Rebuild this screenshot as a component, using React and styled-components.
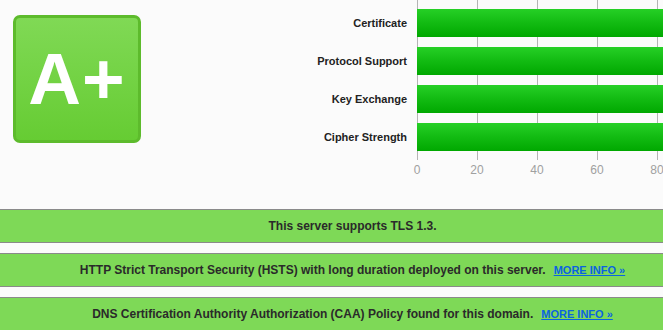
import React from 'react'
import styled, { createGlobalStyle } from 'styled-components';

const GlobalStyle = createGlobalStyle`
  html, body {
    margin: 0;
    padding: 0;
    background: #fbfbfb;
    font-family: "Liberation Sans", Arial, sans-serif;
    overflow: hidden;
  }
`;

const categories = ['Certificate', 'Protocol Support', 'Key Exchange', 'Cipher Strength'];
const ticks = [0, 20, 40, 60, 80];

const notices = [
    { text: 'This server supports TLS 1.3.' },
    { text: 'HTTP Strict Transport Security (HSTS) with long duration deployed on this server.', link: true },
    { text: 'DNS Certification Authority Authorization (CAA) Policy found for this domain.', link: true },
];

const App = () => {
    return (
        <Main>
            <GlobalStyle />
            <Summary>
                <Grade>A+</Grade>
                <Chart>
                    <Labels>
                        {categories.map((c) => <Label key={c}>{c}</Label>)}
                    </Labels>
                    <Plot>
                        {categories.map((c) => <Bar key={c} />)}
                    </Plot>
                    <span />
                    <Ticks>
                        {ticks.map((t) => <Tick key={t}>{t}</Tick>)}
                    </Ticks>
                </Chart>
            </Summary>
            <Notices>
                {notices.map((n) => (
                    <Notice key={n.text}>
                        {n.text}
                        {n.link && <MoreInfo href="#">MORE INFO »</MoreInfo>}
                    </Notice>
                ))}
            </Notices>
        </Main>
    )
};

const Main = styled.section`
  width: 663px;
  height: 330px;
  overflow: hidden;
`;

const Summary = styled.div`
  display: flex;
  align-items: flex-start;
  height: 209px;
`;

const Grade = styled.div`
  flex-shrink: 0;
  box-sizing: border-box;
  width: 128px;
  height: 128px;
  margin: 15px 0 0 13px;
  border: 3px solid #5dbb2c;
  border-radius: 7px;
  background: linear-gradient(to bottom, #80d955 0%, #66cc33 100%);
  color: #fff;
  font-size: 73px;
  font-weight: bold;
  display: flex;
  align-items: center;
  justify-content: center;
  letter-spacing: 1px;
  padding-bottom: 1px;
`;

const Chart = styled.div`
  flex-shrink: 0;
  display: grid;
  grid-template-columns: 266px 300px;
  column-gap: 10px;
`;

const Labels = styled.div`
  display: flex;
  flex-direction: column;
  gap: 10px;
  padding-top: 9px;
`;

const Label = styled.div`
  height: 28px;
  line-height: 28px;
  text-align: right;
  font-size: 11px;
  font-weight: bold;
  color: #222;
`;

const Plot = styled.div`
  display: flex;
  flex-direction: column;
  gap: 10px;
  padding: 9px 0 9px;
  background: repeating-linear-gradient(to right, #b4b4b4 0 1px, transparent 1px 60px);
`;

const Bar = styled.div`
  height: 28px;
  width: 300px;
  background: linear-gradient(to bottom, #26d026 0%, #12bb12 50%, #00a800 100%);
`;

const Ticks = styled.div`
  display: grid;
  grid-template-columns: repeat(5, 60px);
  margin-left: -30px;
  padding-top: 3px;
`;

const Tick = styled.div`
  text-align: center;
  font-size: 12px;
  color: #a0a0a0;
`;

const Notices = styled.div`
  display: flex;
  flex-direction: column;
  gap: 10px;
`;

const Notice = styled.div`
  height: 32px;
  line-height: 32px;
  border-top: 1px solid #8a8a8a;
  border-bottom: 1px solid #8a8a8a;
  background: #7ed957;
  text-align: center;
  padding-left: 42px;
  font-size: 12px;
  font-weight: bold;
  color: #2a2a2a;
  white-space: nowrap;
`;

const MoreInfo = styled.a`
  margin-left: 8px;
  color: #0a64e0;
  font-size: 11px;
  text-decoration: underline;
`;

export default App;
